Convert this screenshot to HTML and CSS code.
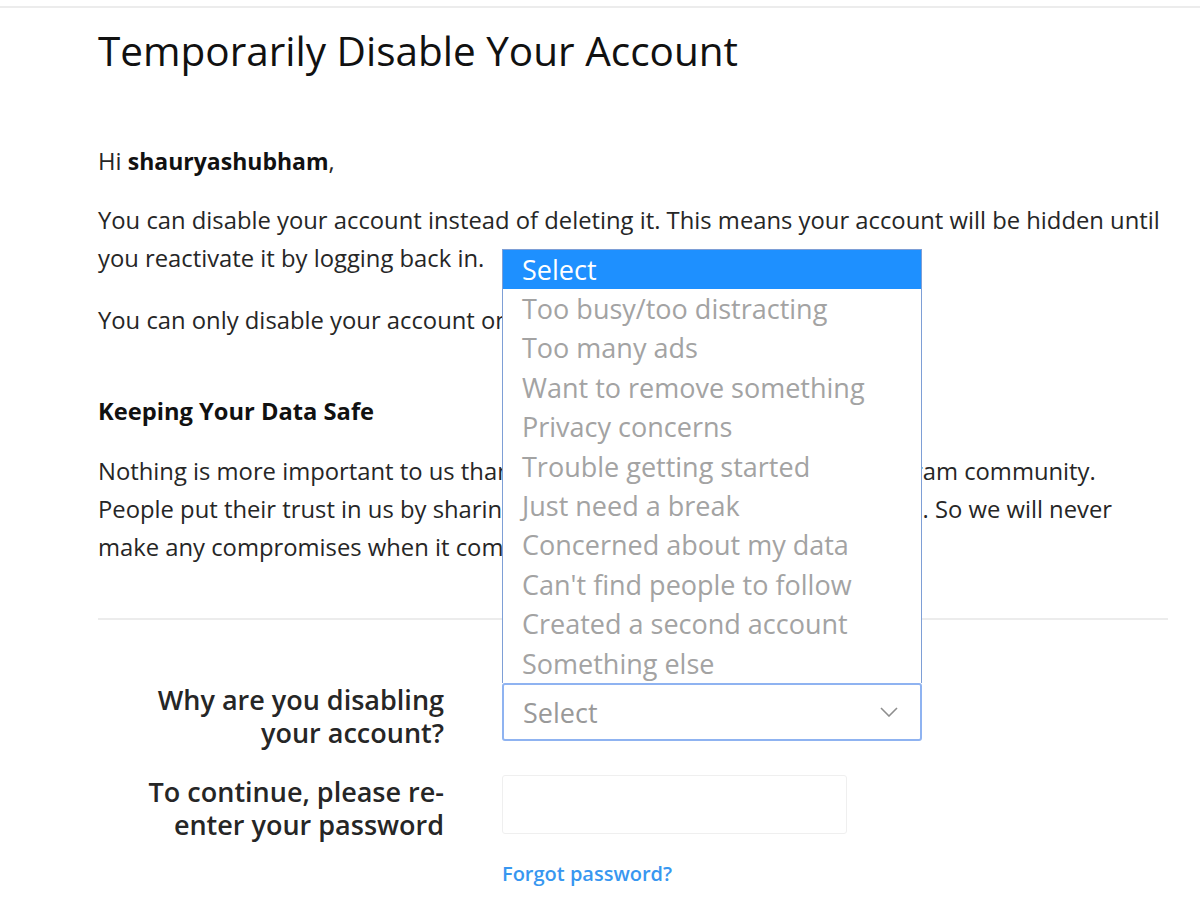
FILE: index.html
```html
<!DOCTYPE html>
<html lang="en">
<head>
    <meta charset="UTF-8">
    <meta name="viewport" content="width=device-width, initial-scale=1.0">
    <title>Temporarily Disable Your Account</title>
    <link rel="stylesheet" href="styles.css">
</head>
<body>
<div class="top-line"></div>
<div class="page">
    <h1>Temporarily Disable Your Account</h1>

    <p class="greeting">Hi <strong>shauryashubham</strong>,</p>
    <p>You can disable your account instead of deleting it. This means your account will be hidden until you reactivate it by logging back in.</p>
    <p>You can only disable your account once a week.</p>

    <h2>Keeping Your Data Safe</h2>
    <p>Nothing is more important to us than the safety and security of the Instagram community. People put their trust in us by sharing moments of their lives on Instagram. So we will never make any compromises when it comes to safeguarding your data.</p>

    <div class="divider"></div>

    <div class="form">
        <div class="form-row">
            <label class="form-label" for="reason">Why are you disabling your account?</label>
            <div class="select-wrap">
                <!-- open dropdown list -->
                <ul class="options">
                    <li class="active">Select</li>
                    <li>Too busy/too distracting</li>
                    <li>Too many ads</li>
                    <li>Want to remove something</li>
                    <li>Privacy concerns</li>
                    <li>Trouble getting started</li>
                    <li>Just need a break</li>
                    <li>Concerned about my data</li>
                    <li>Can't find people to follow</li>
                    <li>Created a second account</li>
                    <li>Something else</li>
                </ul>
                <div class="select-box" id="reason">
                    <span>Select</span>
                    <svg class="chevron" width="18" height="10" viewBox="0 0 18 10">
                        <path d="M1 1 L9 9 L17 1" fill="none" stroke="#8e8e8e" stroke-width="1.6"/>
                    </svg>
                </div>
            </div>
        </div>
        <div class="form-row">
            <label class="form-label" for="password">To continue, please re-enter your password</label>
            <div>
                <input type="password" id="password" class="password">
                <a href="#" class="forgot">Forgot password?</a>
            </div>
        </div>
    </div>
</div>
</body>
</html>
```

FILE: styles.css
```css
/* 全局样式 */
body {
    font-family: 'Open Sans', 'Noto Sans', sans-serif;
    margin: 0;
    padding: 0;
    background: #fff;
    color: #262626;
}

.top-line {
    height: 2px;
    margin-top: 6px;
    background: #ececec;
}

.page {
    width: 1070px;
    padding-left: 98px;
}

h1 {
    font-size: 40.5px;
    font-weight: 400;
    margin: 17px 0 0;
    line-height: 52px;
    color: #111;
}

p {
    max-width: 1062px;
    font-size: 23.8px;
    line-height: 38px;
    margin: 0 0 24px;
}

.greeting {
    margin-top: 65px;
    margin-bottom: 21px;
}

.greeting strong {
    font-size: 23px;
    font-weight: 700;
    color: #111;
}

h2 {
    font-size: 23.7px;
    font-weight: 700;
    line-height: 38px;
    margin: 53px 0 22px;
    color: #111;
}

.divider {
    height: 2px;
    background: #ececec;
    margin-top: 52px;
}

/* 表单 */
.form {
    padding-top: 63px;
}

.form-row {
    display: grid;
    grid-template-columns: 346px 420px;
    column-gap: 58px;
    margin-bottom: 26px;
}

.form-label {
    text-align: right;
    font-size: 27px;
    font-weight: 600;
    line-height: 33px;
    color: #262626;
}

.select-wrap {
    position: relative;
}

.select-box {
    height: 54px;
    border: 2px solid #8fb3f1;
    border-radius: 3px;
    display: flex;
    align-items: center;
    justify-content: space-between;
    padding: 0 22px 0 19px;
    font-size: 27px;
    color: #999;
}

.options {
    position: absolute;
    left: 0;
    bottom: 100%;
    width: 420px;
    box-sizing: border-box;
    margin: 0;
    padding: 0;
    list-style: none;
    border: 1px solid #7e9fd6;
    border-bottom: none;
    background: #fff;
    z-index: 2;
}

.options li {
    height: 39.4px;
    line-height: 39px;
    padding-left: 19px;
    font-size: 27px;
    color: #a3a3a3;
}

.options li.active {
    background: #1e90ff;
    color: #fff;
}

.password {
    display: block;
    width: 345px;
    height: 59px;
    box-sizing: border-box;
    border: 1px solid #efefef;
    border-radius: 3px;
    background: #fff;
}

.forgot {
    display: inline-block;
    margin-top: 26px;
    font-size: 20px;
    font-weight: 600;
    color: #3897f0;
    text-decoration: none;
}
```
